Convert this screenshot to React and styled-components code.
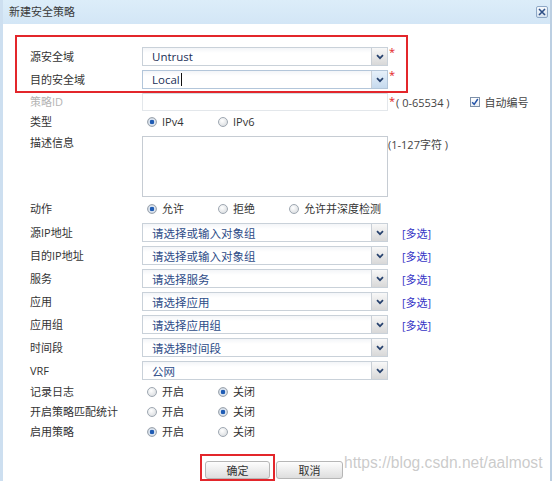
import React from "react";
import styled, { createGlobalStyle } from "styled-components";

const GlobalStyle = createGlobalStyle`
  html, body {
    margin: 0;
    padding: 0;
    background: #fff;
  }
  body {
    font-family: "Open Sans", "Noto Sans CJK SC", sans-serif;
    font-size: 11px;
    color: #333;
  }
`;

const Dialog = styled.div`
  position: relative;
  box-sizing: border-box;
  width: 552px;
  height: 481px;
  overflow: hidden;
  border-left: 3px solid #cddff0;
  border-right: 2px solid #bccfe2;
  background: #fff;
`;

const TitleBar = styled.div`
  display: flex;
  align-items: center;
  height: 24px;
  padding: 0 2px 0 6px;
  background: linear-gradient(#dcedf9, #d3e6f6);
`;

const Title = styled.span`
  font-size: 11px;
  line-height: 14px;
  color: #3a3a3a;
`;

const CloseButton = styled.span`
  margin-left: auto;
  width: 10px;
  height: 10px;
  border: 1px solid #8ea8c6;
  border-radius: 2px;
  background: linear-gradient(#f6f9fc, #d5e2ef);
  display: flex;
  align-items: center;
  justify-content: center;
`;

const Body = styled.div`
  padding-top: 11px;
`;

const HighlightBox = styled.div`
  box-sizing: border-box;
  margin-left: 12px;
  width: 393px;
  height: 58px;
  border: 2px solid #e3262b;
  padding: 8px 0 0 13px;
`;

const Row = styled.div`
  display: grid;
  grid-template-columns: 112px 246px auto;
  align-items: ${(p) => (p.$top ? "start" : "center")};
  height: ${(p) => p.$h}px;
  padding-left: ${(p) => (p.$inset ? 0 : 27)}px;
`;

const Label = styled.span`
  line-height: 14px;
  white-space: nowrap;
  color: ${(p) => (p.$muted ? "#b4b4b4" : "#333")};
  margin-top: ${(p) => (p.$top ? 3 : 0)}px;
`;

const SelectBox = styled.div`
  box-sizing: border-box;
  display: flex;
  height: 19px;
  border: 1px solid ${(p) => (p.$active ? "#b3c6da" : "#c9d1d9")};
  background: linear-gradient(#f3f5f8, #fff 5px);
`;

const SelectValue = styled.span`
  flex: 1;
  display: flex;
  align-items: center;
  padding-left: 9px;
  font-size: 11.5px;
  color: ${(p) => (p.$placeholder ? "#2d4c88" : "#1b2f57")};
`;

const Caret = styled.span`
  display: inline-block;
  width: 1px;
  height: 13px;
  margin-left: 1px;
  background: #111;
`;

const SelectArrow = styled.span`
  width: 15px;
  border-left: 1px solid #c9cfd6;
  background: ${(p) =>
    p.$active
      ? "linear-gradient(#e6f0fa, #c6daee)"
      : "linear-gradient(#f8f8f8, #d8d8d8)"};
  display: flex;
  align-items: center;
  justify-content: center;
`;

const Star = styled.span`
  align-self: start;
  margin: 1px 0 0 1px;
  color: #e3201c;
  font-size: 11px;
  line-height: 12px;
`;

const Extra = styled.div`
  display: flex;
  align-items: center;
  white-space: nowrap;
`;

const Hint = styled.span`
  color: #444;
  white-space: nowrap;
  margin-left: ${(p) => p.$gap || 0}px;
  margin-top: ${(p) => (p.$top ? 3 : 0)}px;
`;

const MultiLink = styled.a`
  margin-left: 14px;
  color: #3535c6;
  text-decoration: none;
`;

const PlainInput = styled.div`
  box-sizing: border-box;
  height: 18px;
  border: 1px solid #e3e7eb;
  border-top-color: #d6dbe0;
`;

const Checkbox = styled.span`
  box-sizing: border-box;
  width: 10px;
  height: 10px;
  margin: 0 5px 0 20px;
  border: 1px solid #7d90a8;
  background: linear-gradient(#fff, #e9eef4);
  display: flex;
  align-items: center;
  justify-content: center;
`;

const TextArea = styled.div`
  box-sizing: border-box;
  margin-top: 3px;
  height: 61px;
  border: 1px solid #c6ccd3;
`;

const RadioGroup = styled.div`
  grid-column: 2 / 4;
  display: flex;
  align-items: center;
  padding-left: 5px;
`;

const RadioOption = styled.label`
  display: flex;
  align-items: center;
  gap: 5px;
  width: ${(p) => (p.$last ? "auto" : "71px")};
  white-space: nowrap;
  color: #333;
  line-height: 14px;
`;

const RadioDot = styled.span`
  box-sizing: border-box;
  width: 10px;
  height: 10px;
  border-radius: 50%;
  border: 1px solid #9ea7b1;
  background: ${(p) =>
    p.$checked
      ? "radial-gradient(circle, #1f5cb4 0 2px, #dfe8f3 2.6px 3px, #c3cad2 4px)"
      : "radial-gradient(circle at 40% 35%, #fff, #d2d6da)"};
`;

const Footer = styled.div`
  display: flex;
  align-items: flex-start;
  margin-top: 12px;
  padding-left: 197px;
`;

const ConfirmFrame = styled.div`
  border: 2px solid #e3262b;
  padding: 5px 3px 0;
`;

const Button = styled.button`
  box-sizing: border-box;
  width: ${(p) => p.$w}px;
  height: 18px;
  margin: ${(p) => (p.$offset ? "7px 0 0 1px" : 0)};
  padding: 0;
  border: 1px solid #b6b6b6;
  border-radius: 3px;
  background: linear-gradient(#fdfdfd, #dedede);
  font-family: "Noto Sans CJK SC", sans-serif;
  font-size: 11px;
  color: #333;
`;

const Watermark = styled.span`
  position: absolute;
  left: 341px;
  top: 453px;
  font-family: "Liberation Sans", Arial, sans-serif;
  font-size: 15.6px;
  line-height: 20px;
  color: rgba(180, 180, 180, 0.7);
  white-space: nowrap;
`;

const Chevron = () => (
  <svg width="8" height="6" viewBox="0 0 8 6">
    <path d="M1 1.2 L4 4.2 L7 1.2" fill="none" stroke="#27426e" strokeWidth="1.7" />
  </svg>
);

const Select = ({ value, placeholder, active, caret }) => (
  <SelectBox $active={active}>
    <SelectValue $placeholder={placeholder}>
      {value}
      {caret && <Caret />}
    </SelectValue>
    <SelectArrow $active={active}>
      <Chevron />
    </SelectArrow>
  </SelectBox>
);

const Radios = ({ options, checked }) => (
  <RadioGroup>
    {options.map((o, i) => (
      <RadioOption key={o} $last={i === options.length - 1 && options.length > 2}>
        <RadioDot $checked={i === checked} />
        {o}
      </RadioOption>
    ))}
  </RadioGroup>
);

const pickers = [
  ["源IP地址", "请选择或输入对象组", true],
  ["目的IP地址", "请选择或输入对象组", true],
  ["服务", "请选择服务", true],
  ["应用", "请选择应用", true],
  ["应用组", "请选择应用组", true],
  ["时间段", "请选择时间段", false],
  ["VRF", "公网", false],
];

const switches = [
  ["记录日志", 1],
  ["开启策略匹配统计", 1],
  ["启用策略", 0],
];

export default function App() {
  return (
    <>
      <GlobalStyle />
      <Dialog>
        <TitleBar>
          <Title>新建安全策略</Title>
          <CloseButton>
            <svg width="8" height="8" viewBox="0 0 8 8">
              <path d="M1 1 L7 7 M7 1 L1 7" stroke="#2d4f86" strokeWidth="1.6" />
            </svg>
          </CloseButton>
        </TitleBar>

        <Body>
          <HighlightBox>
            <Row $h={23} $inset>
              <Label>源安全域</Label>
              <Select value="Untrust" />
              <Star>*</Star>
            </Row>
            <Row $h={23} $inset>
              <Label>目的安全域</Label>
              <Select value="Local" active caret />
              <Star>*</Star>
            </Row>
          </HighlightBox>

          <Row $h={18}>
            <Label $muted>策略ID</Label>
            <PlainInput />
            <Extra>
              <Star>*</Star>
              <Hint $gap={1}>( 0-65534 )</Hint>
              <Checkbox>
                <svg width="8" height="8" viewBox="0 0 8 8">
                  <path d="M1.2 4.2 L3.2 6.4 L6.8 1" fill="none" stroke="#2453a8" strokeWidth="1.5" />
                </svg>
              </Checkbox>
              <Hint>自动编号</Hint>
            </Extra>
          </Row>

          <Row $h={22}>
            <Label>类型</Label>
            <Radios options={["IPv4", "IPv6"]} checked={0} />
          </Row>

          <Row $h={64} $top>
            <Label $top>描述信息</Label>
            <TextArea />
            <Hint $top>(1-127字符 )</Hint>
          </Row>

          <Row $h={24}>
            <Label>动作</Label>
            <Radios options={["允许", "拒绝", "允许并深度检测"]} checked={0} />
          </Row>

          {pickers.map(([label, text, multi]) => (
            <Row key={label} $h={23}>
              <Label>{label}</Label>
              <Select value={text} placeholder />
              {multi && <MultiLink>[多选]</MultiLink>}
            </Row>
          ))}

          {switches.map(([label, checked]) => (
            <Row key={label} $h={20}>
              <Label>{label}</Label>
              <Radios options={["开启", "关闭"]} checked={checked} />
            </Row>
          ))}

          <Footer>
            <ConfirmFrame>
              <Button $w={65}>确定</Button>
            </ConfirmFrame>
            <Button $w={67} $offset>
              取消
            </Button>
          </Footer>
        </Body>

        <Watermark>https://blog.csdn.net/aalmost</Watermark>
      </Dialog>
    </>
  );
}
